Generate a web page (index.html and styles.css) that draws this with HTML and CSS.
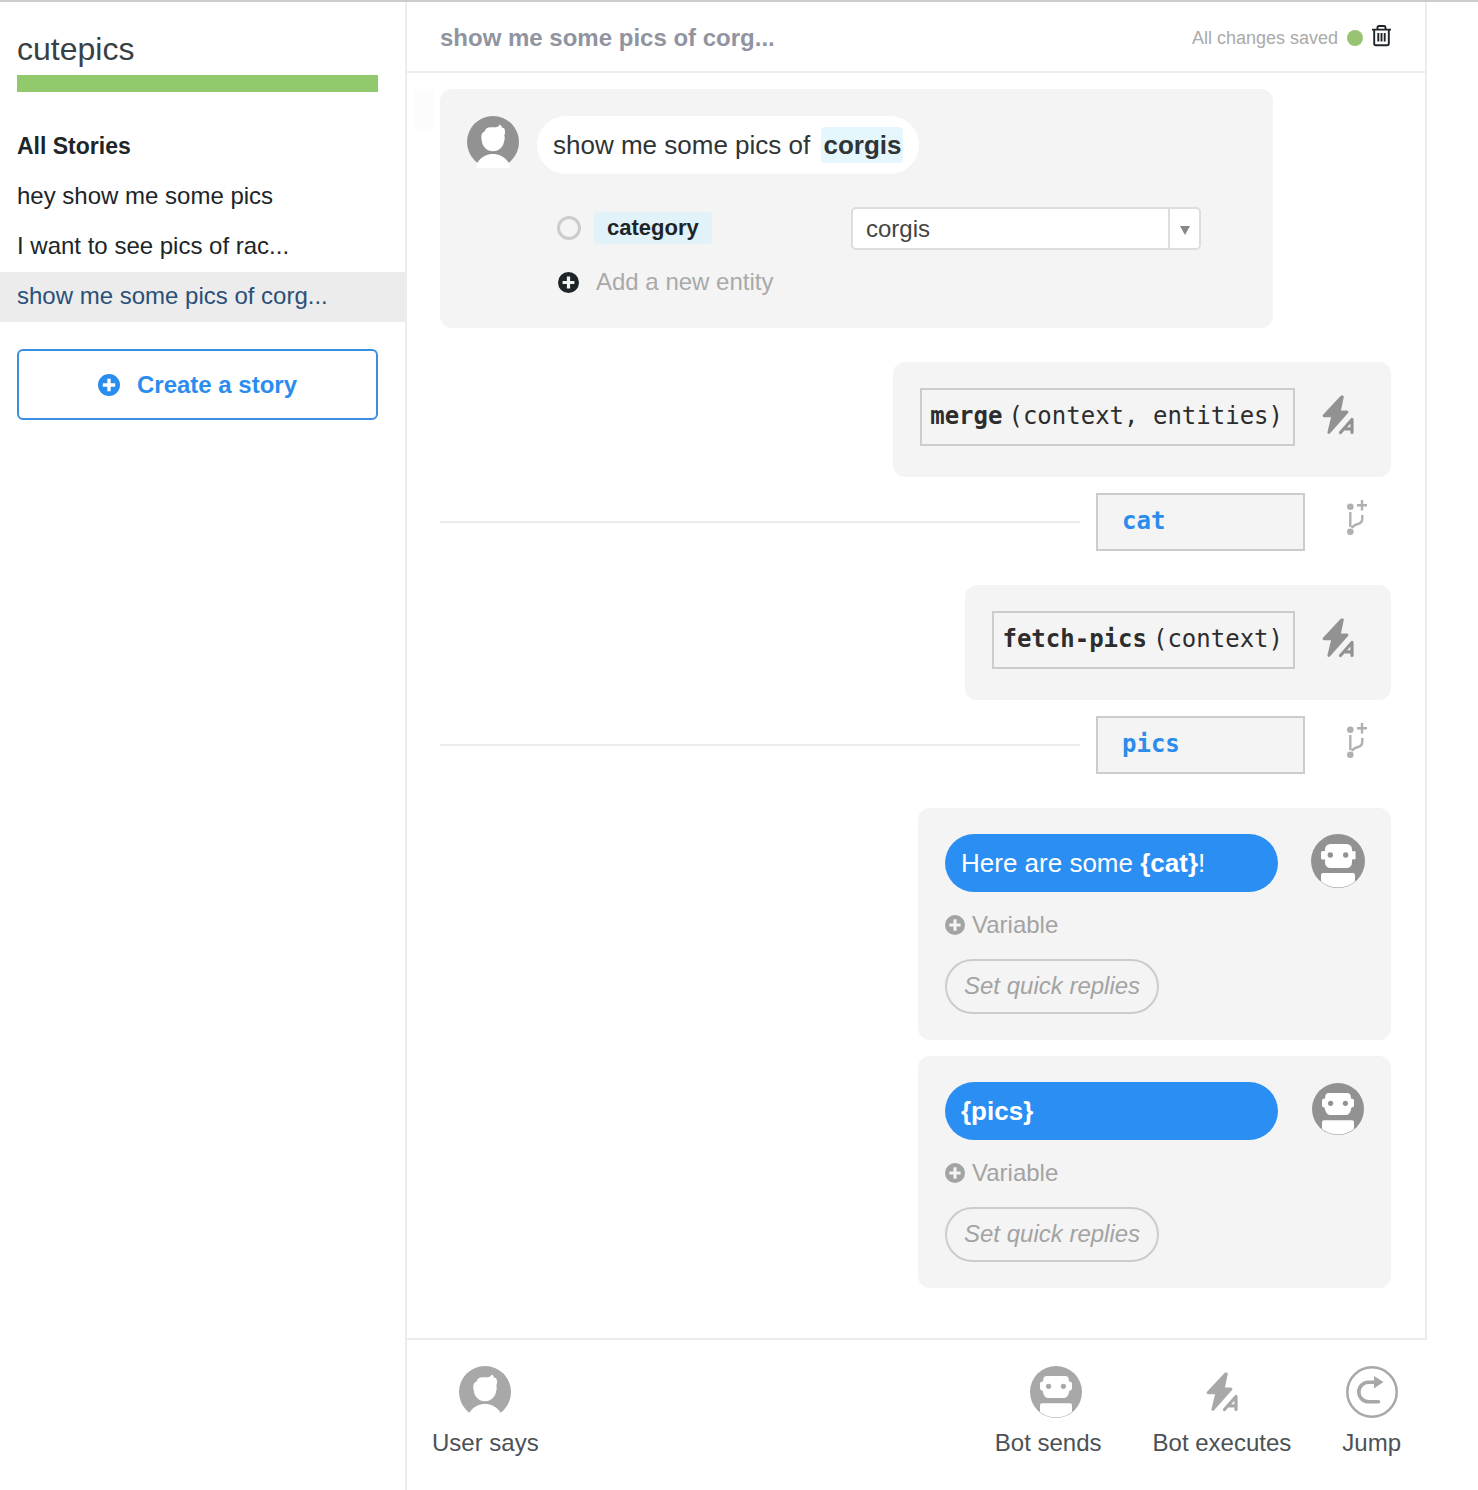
FILE: index.html
```html
<!DOCTYPE html>
<html lang="en">
<head>
<meta charset="utf-8">
<meta name="viewport" content="width=device-width, initial-scale=1">
<title>cutepics</title>
<link rel="stylesheet" href="styles.css">
</head>
<body>
<svg class="sprite" aria-hidden="true">
  <symbol id="plus" viewBox="0 0 22 22">
    <path fill="currentColor" fill-rule="evenodd" d="M11 0a11 11 0 1 0 0 22a11 11 0 1 0 0-22zM9.300 4.800h3.400v4.500h4.500v3.400h-4.500v4.500H9.300v-4.500H4.800V9.300h4.500z"/>
  </symbol>
  <symbol id="user" viewBox="0 0 52 52">
    <circle cx="26" cy="26" r="26" fill="currentColor"/>
    <path fill="#fff" d="M9 52C9.500 48 10.500 46 12 44.500C15.500 40.500 20 38 26 38S36.500 40.500 40 44.500C41.500 46 42.500 48 43 52Z"/>
    <path fill="#fff" d="M17.500 15.500C18.500 12 21 10.800 24.500 11.200C28 11.600 31.500 11.500 32.700 8.500C34.500 9.500 35 10.800 35 12C38 10.500 38.800 16.500 37.300 19.500C38 21 37.800 23 37.300 24.500C36.500 31 32 35.300 26 35.300S15 30.500 14.700 24C13.800 20 14.500 16.500 17.500 15.500Z"/>
  </symbol>
  <symbol id="bot" viewBox="0 0 54 54">
    <clipPath id="bot-clip"><circle cx="27" cy="26.500" r="27"/></clipPath>
    <circle cx="27" cy="27" r="27" fill="currentColor"/>
    <g fill="#fff">
      <rect x="14" y="10" width="27" height="24" rx="5.500"/>
      <rect x="10" y="17" width="3" height="8.500" rx="1.500"/>
      <rect x="42" y="17" width="2.500" height="8.500" rx="1.200"/>
      <rect x="12" y="17" width="30" height="8.500"/>
      <path clip-path="url(#bot-clip)" d="M10 54V41Q10 39 12 39H42Q44 39 44 41V54Z"/>
    </g>
    <circle cx="19.300" cy="21" r="2.700" fill="currentColor"/>
    <circle cx="34.700" cy="21" r="2.700" fill="currentColor"/>
  </symbol>
  <symbol id="bot-small" viewBox="0 0 52 52">
    <clipPath id="bot-small-clip"><circle cx="26" cy="25.500" r="26"/></clipPath>
    <circle cx="26" cy="26" r="26" fill="currentColor"/>
    <g fill="#fff">
      <path d="M17 10H35Q38 10 38.500 12L39 15.500Q42 15.500 42 17.500V22.500Q42 24.500 39.500 24.500L38.500 28Q37 32 34 32H18Q15 32 13.500 28L12.500 24.500Q10 24.500 10 22.500V17.500Q10 15.500 13 15.500L13.500 12Q14 10 17 10Z"/>
      <path clip-path="url(#bot-small-clip)" d="M10 52V39Q10 37.300 12 37.300H40Q42 37.300 42 39V52Z"/>
    </g>
    <circle cx="18.600" cy="20.300" r="2.600" fill="currentColor"/>
    <circle cx="33.400" cy="20.300" r="2.600" fill="currentColor"/>
  </symbol>
  <symbol id="bolt" viewBox="0 0 32 40">
    <path fill="currentColor" stroke="currentColor" stroke-width="2.800" stroke-linejoin="round" d="M19.800 1.800L2 20.800H10.800L6.800 37.500L25 17H17.200L20.400 1.800Z"/>
    <path fill="none" stroke="currentColor" stroke-width="3.200" stroke-linecap="round" stroke-linejoin="round" d="M18.500 37.500L30 24.500V37.500M22.500 33.800H30"/>
  </symbol>
  <symbol id="branch" viewBox="0 0 22 38">
    <g fill="currentColor"><circle cx="4.300" cy="7.700" r="3.300"/><circle cx="4.300" cy="32.700" r="3.300"/></g>
    <path fill="none" stroke="currentColor" stroke-width="2.400" d="M16 1V11.500M11 6.300H21M4.300 13V28M16.300 16V19.500Q16.300 24 12 25Q7.500 26 6 29"/>
  </symbol>
</svg>

<div class="app">
  <aside class="sidebar">
    <h1 class="app-name">cutepics</h1>
    <div class="progress"></div>
    <h2 class="list-title">All Stories</h2>
    <nav class="stories">
      <a class="story" href="#">hey show me some pics</a>
      <a class="story" href="#">I want to see pics of rac...</a>
      <a class="story story-active" href="#">show me some pics of corg...</a>
    </nav>
    <button class="create" type="button"><svg class="icon-22"><use href="#plus"/></svg>Create a story</button>
  </aside>

  <div class="workspace">
    <main class="editor">
      <header class="topbar">
        <h2 class="story-title">show me some pics of corg...</h2>
        <div class="status">
          <span>All changes saved</span>
          <span class="dot"></span>
          <button class="trash" type="button" aria-label="Delete story">
            <svg width="20" height="22" viewBox="0 0 20 22" fill="none" stroke="currentColor" stroke-width="1.900">
              <path d="M0 4.600H19M5.500 4V2.500Q5.500 1 7 1H12Q13.500 1 13.500 2.500V4M2.200 5V18.500Q2.200 20.300 4 20.300H15Q16.800 20.300 16.800 18.500V5M6.300 8V16.500M9.500 8V16.500M12.700 8V16.500"/>
            </svg>
          </button>
        </div>
      </header>

      <div class="steps">
        <section class="card card-user">
          <div class="says">
            <svg class="icon-52"><use href="#user"/></svg>
            <p class="bubble bubble-user">show me some pics of <mark class="entity-mark">corgis</mark></p>
          </div>
          <div class="entity">
            <label class="entity-name"><input class="radio" type="radio" name="entity"><span class="tag">category</span></label>
            <div class="combo">
              <input class="combo-input" type="text" value="corgis" aria-label="Value of category">
              <button class="combo-button" type="button" aria-label="Show values">
                <svg width="10" height="9" viewBox="0 0 10 9"><path fill="#888" d="M0 0H10L5 9Z"/></svg>
              </button>
            </div>
          </div>
          <button class="add-entity" type="button"><svg class="icon-21"><use href="#plus"/></svg><span>Add a new entity</span></button>
        </section>

        <section class="card card-action">
          <button class="action" type="button"><b>merge</b><span>(context, entities)</span></button>
          <span class="slot"><svg class="icon-bolt"><use href="#bolt"/></svg></span>
        </section>

        <div class="context">
          <hr class="rule">
          <input class="context-key" type="text" value="cat" aria-label="Context key">
          <button class="fork" type="button" aria-label="Add a fork"><svg class="icon-branch"><use href="#branch"/></svg></button>
        </div>

        <section class="card card-action">
          <button class="action" type="button"><b>fetch-pics</b><span>(context)</span></button>
          <span class="slot"><svg class="icon-bolt"><use href="#bolt"/></svg></span>
        </section>

        <div class="context">
          <hr class="rule">
          <input class="context-key" type="text" value="pics" aria-label="Context key">
          <button class="fork" type="button" aria-label="Add a fork"><svg class="icon-branch"><use href="#branch"/></svg></button>
        </div>

        <section class="card card-bot">
          <div class="reply">
            <p class="bubble bubble-bot">Here are some <b>{cat}</b>!</p>
            <button class="variable" type="button"><svg class="icon-20"><use href="#plus"/></svg>Variable</button>
            <button class="quick" type="button">Set quick replies</button>
          </div>
          <span class="slot"><svg class="icon-54"><use href="#bot"/></svg></span>
        </section>

        <section class="card card-bot">
          <div class="reply">
            <p class="bubble bubble-bot"><b>{pics}</b></p>
            <button class="variable" type="button"><svg class="icon-20"><use href="#plus"/></svg>Variable</button>
            <button class="quick" type="button">Set quick replies</button>
          </div>
          <span class="slot"><svg class="icon-52"><use href="#bot-small"/></svg></span>
        </section>
      </div>
    </main>

    <footer class="toolbar">
      <button class="tool tool-first" type="button"><svg class="icon-52"><use href="#user"/></svg>User says</button>
      <button class="tool tool-bot" type="button"><svg class="icon-52"><use href="#bot-small"/></svg>Bot sends</button>
      <button class="tool" type="button"><span class="tool-icon"><svg class="icon-bolt"><use href="#bolt"/></svg></span>Bot executes</button>
      <button class="tool" type="button">
        <svg class="icon-52" viewBox="0 0 52 52" fill="none" stroke="currentColor">
          <circle cx="26" cy="26" r="24.700" stroke-width="2.500"/>
          <path stroke-width="3.600" stroke-linecap="round" d="M29 16.300H22.500A9.700 9.700 0 0 0 22.500 35.700H32.500"/>
          <path fill="currentColor" stroke="none" d="M28 10L37.500 16L28 22.500Z"/>
        </svg>Jump</button>
    </footer>
  </div>
</div>
</body>
</html>
```
FILE: styles.css
```css
* {
  box-sizing: border-box;
}

body {
  margin: 0;
  background: #fff;
  color: #2f3436;
  font: 24px/32px "Liberation Sans", Arial, sans-serif;
}

h1, h2, p {
  margin: 0;
}

button, input {
  margin: 0;
  padding: 0;
  border: 0;
  background: none;
  color: inherit;
  font: inherit;
}

svg {
  display: block;
  flex: none;
}

.sprite {
  position: absolute;
  width: 0;
  height: 0;
}

.icon-20 { width: 20px; height: 20px; }
.icon-21 { width: 21px; height: 21px; }
.icon-22 { width: 22px; height: 22px; }
.icon-52 { width: 52px; height: 52px; }
.icon-54 { width: 54px; height: 54px; }
.icon-bolt { width: 32px; height: 40px; }
.icon-branch { width: 22px; height: 38px; }

.app {
  display: flex;
  min-height: 100vh;
  border-top: 2px solid #ccc;
}

/* Sidebar */

.sidebar {
  flex: none;
  width: 407px;
  padding-top: 27px;
  border-right: 2px solid #ececec;
}

.app-name {
  padding: 0 17px;
  color: #374144;
  font-size: 32px;
  font-weight: 400;
  line-height: 40px;
}

.progress {
  height: 17px;
  margin: 6px 27px 38px 17px;
  background: #93c96d;
}

.list-title {
  padding: 0 17px;
  margin-bottom: 10px;
  color: #1d2528;
  font-size: 23px;
}

.story {
  display: block;
  height: 50px;
  padding: 0 17px;
  color: #1d2528;
  line-height: 48px;
  text-decoration: none;
}

.story-active {
  background: #ececec;
  color: #2a5078;
}

.create {
  display: flex;
  align-items: center;
  justify-content: center;
  gap: 17px;
  width: 361px;
  height: 71px;
  margin: 27px 17px;
  border: 2px solid #3b8de0;
  border-radius: 6px;
  color: #2b8cf0;
  font-weight: 700;
}

/* Editor */

.workspace {
  display: flex;
  flex: 1;
  flex-direction: column;
  min-width: 0;
  margin-right: 51px;
}

.editor {
  flex: 1;
  border-right: 2px solid #ececec;
  border-bottom: 2px solid #ececec;
}

.topbar {
  display: flex;
  align-items: center;
  justify-content: space-between;
  height: 71px;
  padding: 2px 33px 0;
  border-bottom: 2px solid #ececec;
}

.story-title {
  color: #9094a0;
  font-size: 24px;
}

.status {
  display: flex;
  align-items: center;
  gap: 9px;
  color: #aaa;
  font-size: 18px;
}

.dot {
  width: 16px;
  height: 16px;
  border-radius: 50%;
  background: #98c373;
}

.trash {
  padding-bottom: 4px;
  color: #1d2528;
}

.steps {
  display: flex;
  flex-direction: column;
  align-items: flex-end;
  padding: 16px 34px 50px 33px;
}

.card {
  position: relative;
  border-radius: 12px;
  background: #f4f4f4;
}

.card-user {
  align-self: flex-start;
  width: 833px;
  padding: 27px 27px 30px;
  margin-bottom: 34px;
}

.card-user::before {
  content: "";
  position: absolute;
  top: 0;
  left: -25px;
  width: 18px;
  height: 42px;
  background: #fcfcfc;
}

.says {
  display: flex;
  gap: 18px;
  color: #929292;
}

.bubble {
  height: 58px;
  padding: 0 16px;
  border-radius: 29px;
  font-size: 26px;
  line-height: 58px;
}

.bubble-user {
  background: #fff;
  color: #2f3436;
}

.entity-mark {
  padding: 3px 2px;
  margin-left: 4px;
  border-radius: 4px;
  background: #e5f6fc;
  color: inherit;
  font-weight: 700;
}

.entity {
  display: flex;
  align-items: center;
  margin: 33px 18px 16px 90px;
}

.entity-name {
  display: flex;
  align-items: center;
  gap: 13px;
  width: 294px;
  padding-bottom: 2px;
}

.radio {
  appearance: none;
  width: 24px;
  height: 24px;
  border: 3px solid #ccc;
  border-radius: 50%;
}

.tag {
  padding: 0 13px;
  border-radius: 4px;
  background: #e1f3f8;
  color: #1d2528;
  font-size: 22px;
  font-weight: 700;
}

.combo {
  display: flex;
  width: 350px;
  height: 43px;
  border: 2px solid #ddd;
  border-radius: 5px;
  background: #fff;
}

.combo-input {
  flex: 1;
  min-width: 0;
  padding: 0 13px;
  color: #444;
}

.combo-button {
  display: flex;
  align-items: center;
  justify-content: center;
  width: 31px;
  padding-top: 3px;
  border-left: 2px solid #ddd;
}

.add-entity {
  display: flex;
  align-items: center;
  gap: 17px;
  margin-left: 91px;
  color: #1d2528;
  line-height: 32px;
}

.add-entity span {
  color: #a9a9a9;
}

.card-action {
  display: flex;
  gap: 16px;
  padding: 26px 26px 31px 27px;
  margin-bottom: 16px;
}

.action {
  display: flex;
  align-items: center;
  gap: 6px;
  height: 58px;
  padding: 0 10px 2px 8px;
  border: 2px solid #ccc;
  color: #2d2d2d;
  font-family: "DejaVu Sans Mono", monospace;
}

.slot {
  display: flex;
  align-items: center;
  justify-content: center;
  width: 54px;
  height: 54px;
  color: #929292;
}

.context {
  display: flex;
  align-items: center;
  align-self: stretch;
  margin-bottom: 34px;
}

.rule {
  flex: 1;
  height: 2px;
  margin: 0 16px 0 0;
  border: 0;
  background: #ececec;
}

.context-key {
  width: 209px;
  height: 58px;
  padding: 0 24px 3px;
  border: 2px solid #ccc;
  background: #f4f4f4;
  color: #2b8ceb;
  font-family: "DejaVu Sans Mono", monospace;
  font-weight: 700;
}

.fork {
  display: flex;
  justify-content: center;
  width: 68px;
  padding-bottom: 8px;
  margin-left: 18px;
  color: #b0b0b0;
}

.card-bot {
  display: flex;
  gap: 33px;
  padding: 26px 26px 26px 27px;
}

.card-bot + .card-bot {
  margin-top: 16px;
}

.reply {
  display: flex;
  flex-direction: column;
  align-items: flex-start;
  width: 333px;
}

.bubble-bot {
  align-self: stretch;
  background: #2b8ef2;
  color: #fff;
}

.variable {
  display: flex;
  align-items: center;
  gap: 7px;
  margin: 17px 0 18px;
  color: #a3a3a3;
}

.quick {
  height: 55px;
  padding: 0 17px 2px;
  border: 2px solid #ccc;
  border-radius: 28px;
  color: #a3a3a3;
  font-style: italic;
}

/* Toolbar */

.toolbar {
  display: flex;
  gap: 51px;
  height: 150px;
  padding: 26px 26px 0 25px;
}

.tool {
  display: flex;
  flex-direction: column;
  align-items: center;
  gap: 9px;
  height: 93px;
  color: #4b5154;
}

.tool svg {
  color: #a8a8a8;
}

.tool-icon {
  display: flex;
  align-items: center;
  height: 52px;
}

.tool-first {
  margin-right: auto;
}

/* The robot sits right of its label's centre */
.tool-bot svg {
  margin-left: 16px;
}
```
